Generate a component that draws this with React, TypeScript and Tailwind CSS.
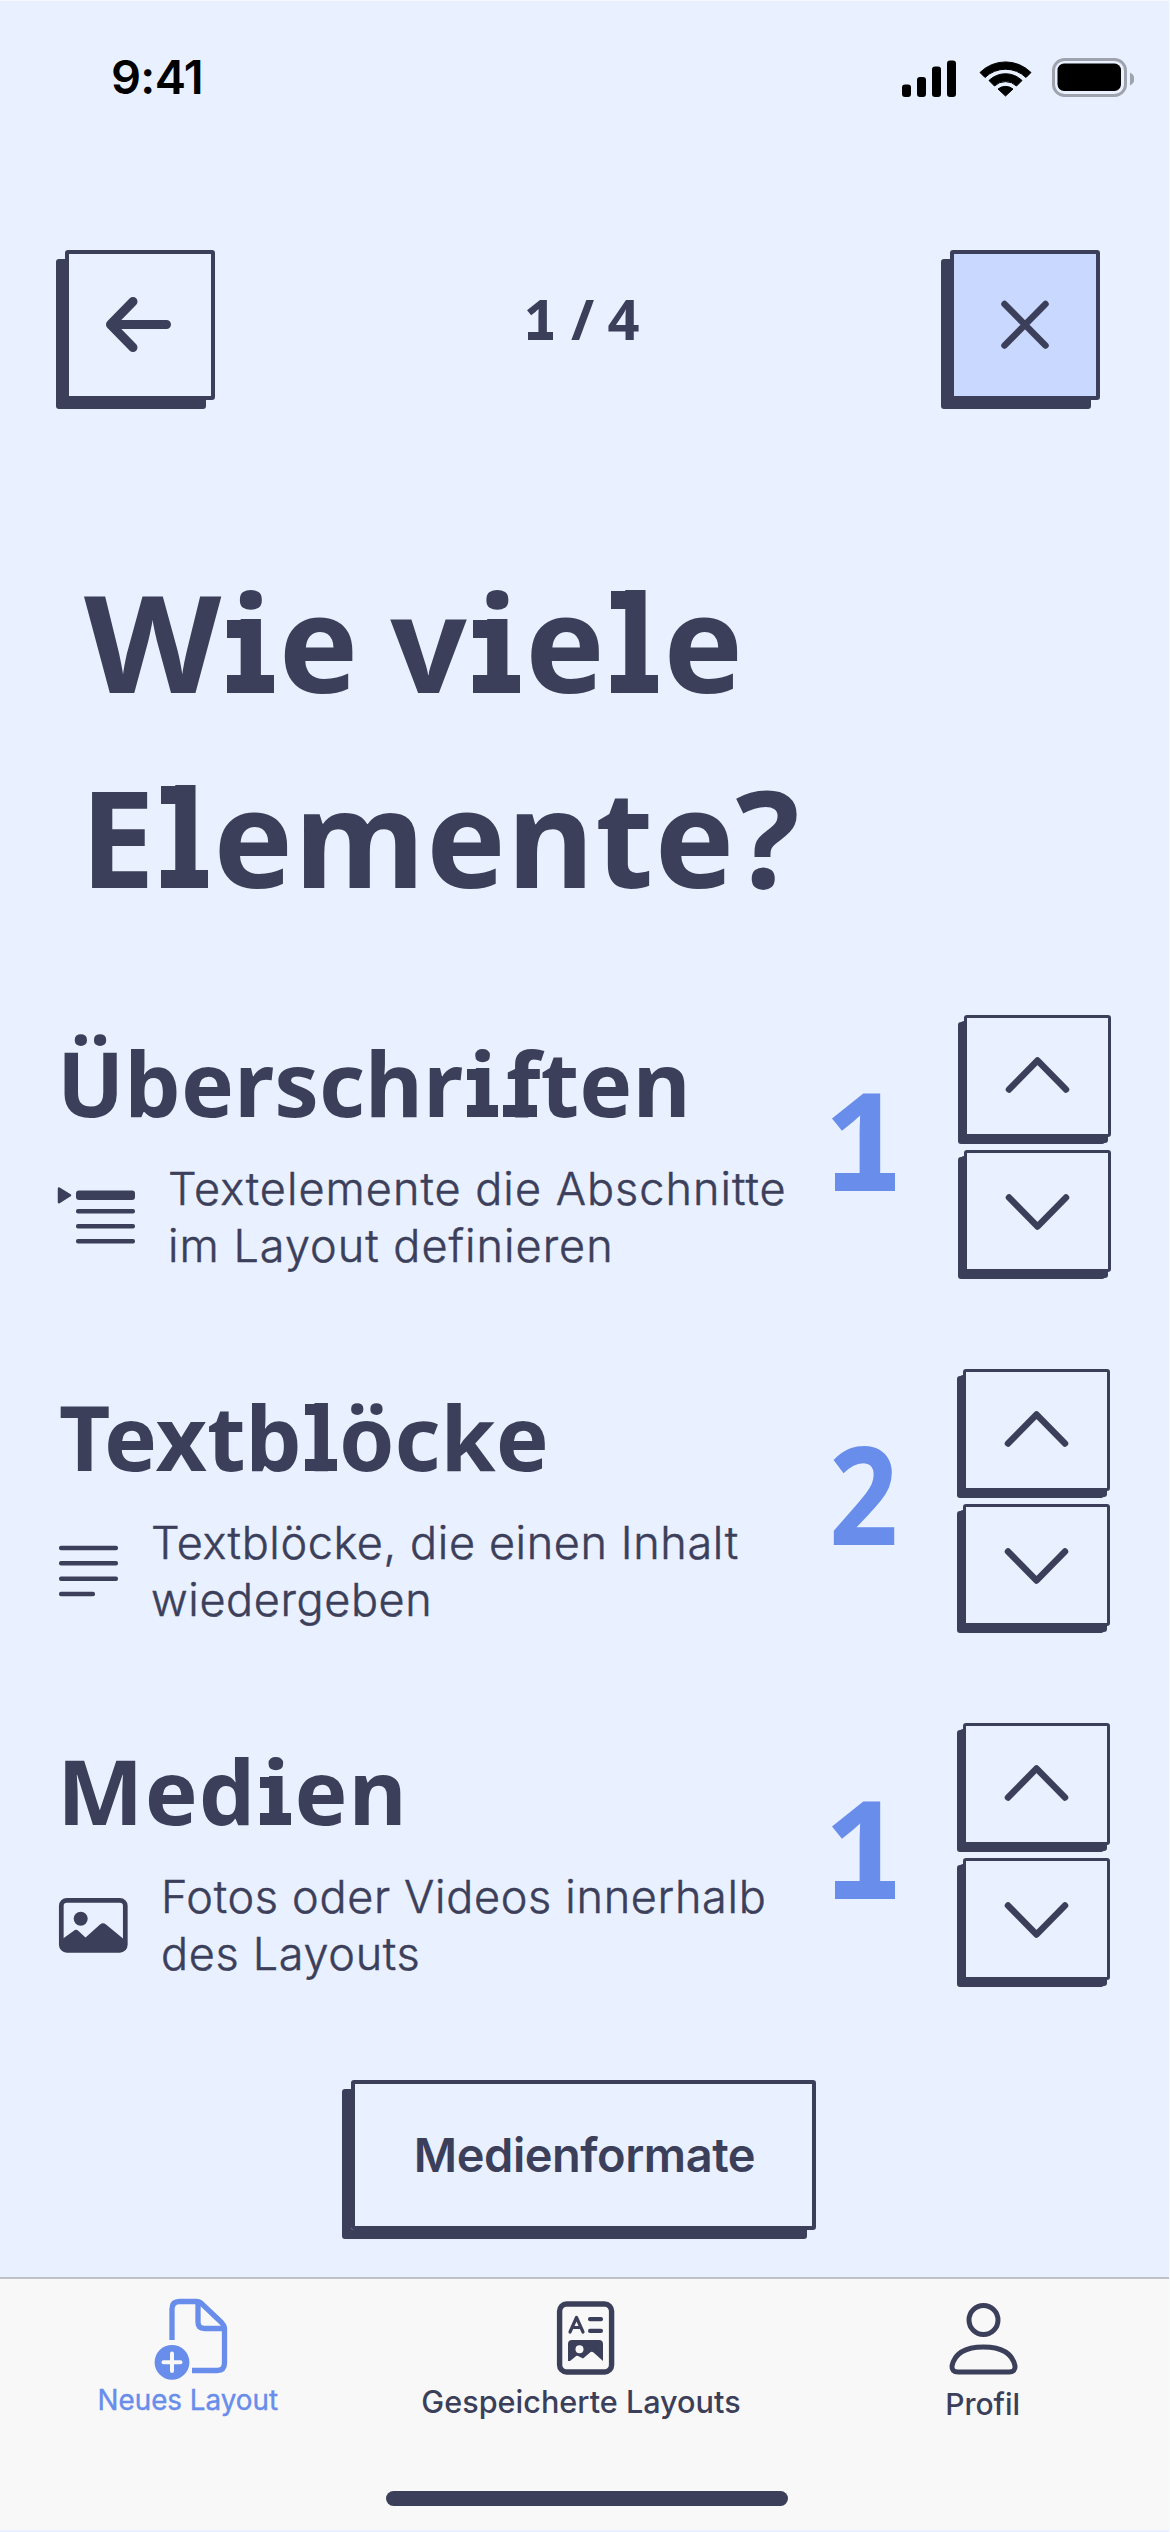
import type { ReactNode } from "react";

const INK = "#3c3f5a";
const BLUE = "#688deb";

const slabFoot =
  "relative before:absolute before:bottom-[0.293em] before:h-[0.13em] before:bg-current before:content-['']";

/* Letters of the display face that carry slab serifs. */
function I() {
  return (
    <span
      className={`${slabFoot} ml-[0.07em] mr-[0.05em] before:left-[-0.03em] before:w-[0.35em] after:absolute after:left-[-0.03em] after:top-[0.524em] after:h-[0.13em] after:w-[0.2em] after:bg-current after:content-['']`}
    >
      i
    </span>
  );
}

function L() {
  return (
    <span
      className={`${slabFoot} ml-[0.07em] mr-[0.05em] before:left-[-0.03em] before:w-[0.35em] after:absolute after:left-[-0.03em] after:top-[0.309em] after:h-[0.13em] after:w-[0.2em] after:bg-current after:content-['']`}
    >
      l
    </span>
  );
}

function F() {
  return <span className={`${slabFoot} ml-[0.06em] before:left-[-0.03em] before:w-[0.38em]`}>f</span>;
}

function One() {
  return <span className={`${slabFoot} -ml-[0.03em] mr-[0.03em] before:left-[0.08em] before:w-[0.44em]`}>1</span>;
}

function StatusBar() {
  return (
    <div className="flex h-[155px] items-start justify-between pl-[111px] pr-[35px] pt-[51px] text-black">
      <span className="h-[50px] text-[47px] font-semibold leading-[50px] tracking-[-0.015em]">9:41</span>
      <svg className="mt-[3px]" width="234" height="46" viewBox="900 55 234 46">
        <rect x="902" y="84.5" width="9" height="12.5" rx="3" />
        <rect x="917" y="77" width="9" height="20" rx="3" />
        <rect x="932" y="66.5" width="9" height="30.5" rx="3" />
        <rect x="947" y="60.5" width="9" height="36.500" rx="3" />
        <path d="M980 72.500 A36 36 0 0 1 1031 72.500 L1026 77.500 A29.500 29.500 0 0 0 985 77.500 Z" stroke="black" strokeLinejoin="round" />
        <path d="M989 80.500 A23.500 23.500 0 0 1 1022 80.500 L1016.500 86 A16 16 0 0 0 994.500 86 Z" stroke="black" strokeLinejoin="round" />
        <path d="M998 89 A12 12 0 0 1 1013 89 L1005.500 96 Z" stroke="black" strokeLinejoin="round" />
        <rect x="1053.500" y="59.500" width="72" height="36" rx="11" fill="none" stroke="#9fa3ae" strokeWidth="3" />
        <rect x="1057.500" y="63.500" width="63.500" height="27.500" rx="6.500" />
        <path d="M1130 72.500 Q1134.500 75 1134.500 79 Q1134.500 83 1130 85.500 Z" fill="#9fa3ae" />
      </svg>
    </div>
  );
}

function SquareButton({ label, fill, children }: { label: string; fill: string; children: ReactNode }) {
  return (
    <button
      aria-label={label}
      className={`flex size-[150px] items-center justify-center rounded-[3px] border-4 border-[#3c3f5a] shadow-[-9px_9px_0_#3c3f5a] ${fill}`}
    >
      <svg width="142" height="142" viewBox="4 4 142 142" fill="none" stroke={INK} strokeLinecap="round" strokeLinejoin="round">
        {children}
      </svg>
    </button>
  );
}

function StepButton({ dir }: { dir: "up" | "down" }) {
  return (
    <button
      aria-label={dir === "up" ? "Mehr" : "Weniger"}
      className="h-[122px] w-[147px] rounded-[3px] border-[3px] border-[#3c3f5a] bg-[#e9f0ff] shadow-[-3px_6px_0_#3c3f5a,-6px_7px_0_#3c3f5a]"
    >
      <svg width="141" height="116" viewBox="3 3 141 116" fill="none" stroke={INK} strokeWidth="6.500" strokeLinecap="round" strokeLinejoin="round">
        <path d={dir === "up" ? "M45 74.500 L73.500 45.500 L102 74.500" : "M45 47.500 L73.500 76.500 L102 47.500"} />
      </svg>
    </button>
  );
}

type RowProps = {
  title: ReactNode;
  titleClass: string;
  icon: ReactNode;
  textClass: string;
  lines: [string, string];
  value: ReactNode;
  stepClass: string;
};

function Row({ title, titleClass, icon, textClass, lines, value, stepClass }: RowProps) {
  return (
    <section className="flex h-[264px]">
      <div className="w-[828px] pt-[18px]">
        <h2 className={`h-[100px] whitespace-nowrap font-['Noto_Sans'] text-[89px] font-bold leading-[100px] ${titleClass}`}>{title}</h2>
        <div className="mt-[27px] flex">
          {icon}
          <p className={`whitespace-nowrap text-[45px] font-light leading-[57px] [-webkit-text-stroke:0.5px_#3c3f5a] ${textClass}`}>
            {lines[0]}
            <br />
            {lines[1]}
          </p>
        </div>
      </div>
      <div className="w-[100px] pt-[56px] font-['Noto_Sans'] text-[136px] font-bold leading-[136px] text-[#688deb]">{value}</div>
      <div className={`flex flex-col gap-[12.500px] ${stepClass}`}>
        <StepButton dir="up" />
        <StepButton dir="down" />
      </div>
    </section>
  );
}

export default function App() {
  return (
    <div className="flex h-[2532px] w-[1170px] flex-col overflow-hidden border-r border-t border-[#f7f9ff] bg-[#e9f0ff] font-[Inter,sans-serif] text-[#3c3f5a]">
      <StatusBar />

      <header className="mt-[94px] flex h-[150px] items-center justify-between pl-[65px] pr-[69px]">
        <SquareButton label="Zurück" fill="bg-[#e9f0ff]">
          <path d="M45.500 74.500 H101.500 M68 51.500 L45.500 74.500 L68 97.500" strokeWidth="9" />
        </SquareButton>
        <div className="whitespace-nowrap pb-[14px] font-['Noto_Sans'] text-[56px] font-bold leading-[60px] [word-spacing:-0.02em]">
          <One /> / 4
        </div>
        <SquareButton label="Schließen" fill="bg-[#c9d8ff]">
          <path d="M54.500 54 L95.500 95.500 M95.500 54 L54.500 95.500" strokeWidth="6.500" />
        </SquareButton>
      </header>

      <h1 className="mt-[144px] h-[390px] whitespace-nowrap pl-[84px] font-['Noto_Sans'] text-[134px] font-bold leading-[195px] tracking-[0.008em]">
        <span className="block [word-spacing:-0.04em]">
          <span className="mr-[0.05em] inline-block origin-left scale-x-[1.06]">W</span><I />e v<I />e<L />e
        </span>
        <span className="-ml-[4px] block">
          E<L />emente?
        </span>
      </h1>

      <main className="mt-[81px] flex flex-col gap-[90px]">
        <Row
          title={<>Überschr<I /><F />ten</>}
          titleClass="pl-[57px] tracking-[0.002em]"
          icon={
            <svg className="ml-[56px] mt-[22px] shrink-0" width="82" height="66" viewBox="56 1182 82 66" fill={INK}>
              <path d="M59 1188.500 L70 1195.300 L59 1202.200 Z" stroke={INK} strokeWidth="2.500" strokeLinejoin="round" />
              <rect x="76" y="1190.500" width="59" height="9.500" rx="3" />
              <rect x="76" y="1209" width="59" height="4.500" rx="2" />
              <rect x="76" y="1224" width="59" height="4.500" rx="2" />
              <rect x="76" y="1239" width="59" height="4.500" rx="2" />
            </svg>
          }
          textClass="ml-[30px] tracking-[0.0225em]"
          lines={["Textelemente die Abschnitte", "im Layout definieren"]}
          value={<One />}
          stepClass="ml-[36px]"
        />
        <Row
          title={<>Textb<L />öcke</>}
          titleClass="pl-[59px]"
          icon={
            <svg className="ml-[56px] mt-[22px] shrink-0" width="66" height="66" viewBox="56 1536 66 66" fill={INK}>
              <rect x="59" y="1545.800" width="59" height="4.500" rx="2" />
              <rect x="59" y="1561" width="59" height="4.500" rx="2" />
              <rect x="59" y="1576.500" width="59" height="4.500" rx="2" />
              <rect x="59" y="1591.800" width="36" height="4.500" rx="2" />
            </svg>
          }
          textClass="ml-[29px] tracking-[0.0135em]"
          lines={["Textblöcke, die einen Inhalt", "wiedergeben"]}
          value={<span className="inline-block origin-left scale-x-[0.89] pl-[1px]">2</span>}
          stepClass="ml-[35px]"
        />
        <Row
          title={<><span className="mr-[0.03em] inline-block origin-left scale-x-[1.03]">M</span>ed<I />en</>}
          titleClass="pl-[57px] tracking-[0.012em]"
          icon={
            <svg className="ml-[56px] mt-[22px] shrink-0" width="76" height="66" viewBox="56 1890 76 66">
              <rect x="61.300" y="1900.300" width="64" height="50" rx="5.500" fill="none" stroke={INK} strokeWidth="4.700" />
              <circle cx="80.700" cy="1918.700" r="7" fill={INK} />
              <path d="M61 1940 L73.500 1931 Q76 1928.500 78.500 1931 L85.500 1937.500 L100 1924.500 Q103 1922 106 1924.500 L126 1941 V1950 H61 Z" fill={INK} />
            </svg>
          }
          textClass="ml-[29px] tracking-[0.015em]"
          lines={["Fotos oder Videos innerhalb", "des Layouts"]}
          value={<One />}
          stepClass="ml-[35px]"
        />
      </main>

      <button className="ml-[351px] mt-[93px] h-[150px] w-[465px] shrink-0 rounded-[3px] border-4 border-[#3c3f5a] pl-[2px] pt-[1px] text-[47px] font-semibold tracking-[-0.01em] shadow-[-9px_9px_0_#3c3f5a]">
        Medienformate
      </button>

      <nav className="mt-[47px] flex h-[253px] shrink-0 flex-col items-center border-t-2 border-[#bfc1c8] bg-[#f8f8f8]">
        <div className="grid h-[212px] w-full grid-cols-3 whitespace-nowrap">
          <a className="flex flex-col items-center pr-[14px] pt-[17px] text-[27.800px] leading-[36px] text-[#688deb] [-webkit-text-stroke:0.4px_#688deb]">
            <svg className="ml-[5px]" width="80" height="86" viewBox="150 2296 80 86" fill="none" stroke={BLUE} strokeWidth="5.300">
              <path d="M172 2340 V2309 Q172 2301.500 179.500 2301.500 H196 Q200 2301.500 203 2305 L221.500 2322.500 Q224.500 2325.500 224.500 2329 V2363 Q224.500 2370.500 217 2370.500 H192" />
              <path d="M198 2302 V2322 Q198 2328.500 204.500 2328.500 H224" />
              <circle cx="172" cy="2362.300" r="17.400" fill={BLUE} stroke="none" />
              <path d="M163.500 2362.300 H180.500 M172 2353.500 V2371" stroke="#f8f8f8" strokeWidth="4" strokeLinecap="round" />
            </svg>
            Neues Layout
          </a>
          <a className="flex flex-col items-center pr-[7px] pt-[19px] text-[30.600px] font-medium leading-[36px]">
            <svg className="ml-[9px]" width="64" height="86" viewBox="553 2298 64 86" fill={INK}>
              <rect x="559.600" y="2304" width="52" height="68" rx="7" fill="none" stroke={INK} strokeWidth="5.400" />
              <path d="M570 2332 L576.500 2317.500 L583 2332 M572.500 2327.500 H580.500" fill="none" stroke={INK} strokeWidth="3.200" strokeLinecap="round" strokeLinejoin="round" />
              <rect x="588" y="2317" width="15" height="4.200" rx="2" />
              <rect x="588" y="2328.800" width="15" height="4.200" rx="2" />
              <path d="M568 2361 V2344 Q568 2340 572 2340 H599 Q603 2340 603 2344 V2361 L593.500 2352.500 Q591.500 2351 589.500 2353 L583 2358.500 L579 2356.500 Q577 2355 575 2357 L570 2361 Z" />
              <circle cx="579.500" cy="2349.300" r="4" fill="#f8f8f8" />
            </svg>
            Gespeicherte Layouts
          </a>
          <a className="flex flex-col items-center pl-[17px] pt-[21px] text-[30px] font-medium leading-[36px]">
            <svg width="76" height="86" viewBox="945 2300 76 86" fill="none" stroke={INK} strokeWidth="5">
              <circle cx="983.500" cy="2320" r="14.500" />
              <path d="M958 2372 H1009 Q1015.500 2372 1015 2366 Q1011 2347 983.500 2347 Q956 2347 952 2366 Q951.500 2372 958 2372 Z" />
            </svg>
            Profil
          </a>
        </div>
        <div className="ml-[5px] h-[15px] w-[402px] rounded-full bg-[#3c3f5a]" />
      </nav>
    </div>
  );
}
